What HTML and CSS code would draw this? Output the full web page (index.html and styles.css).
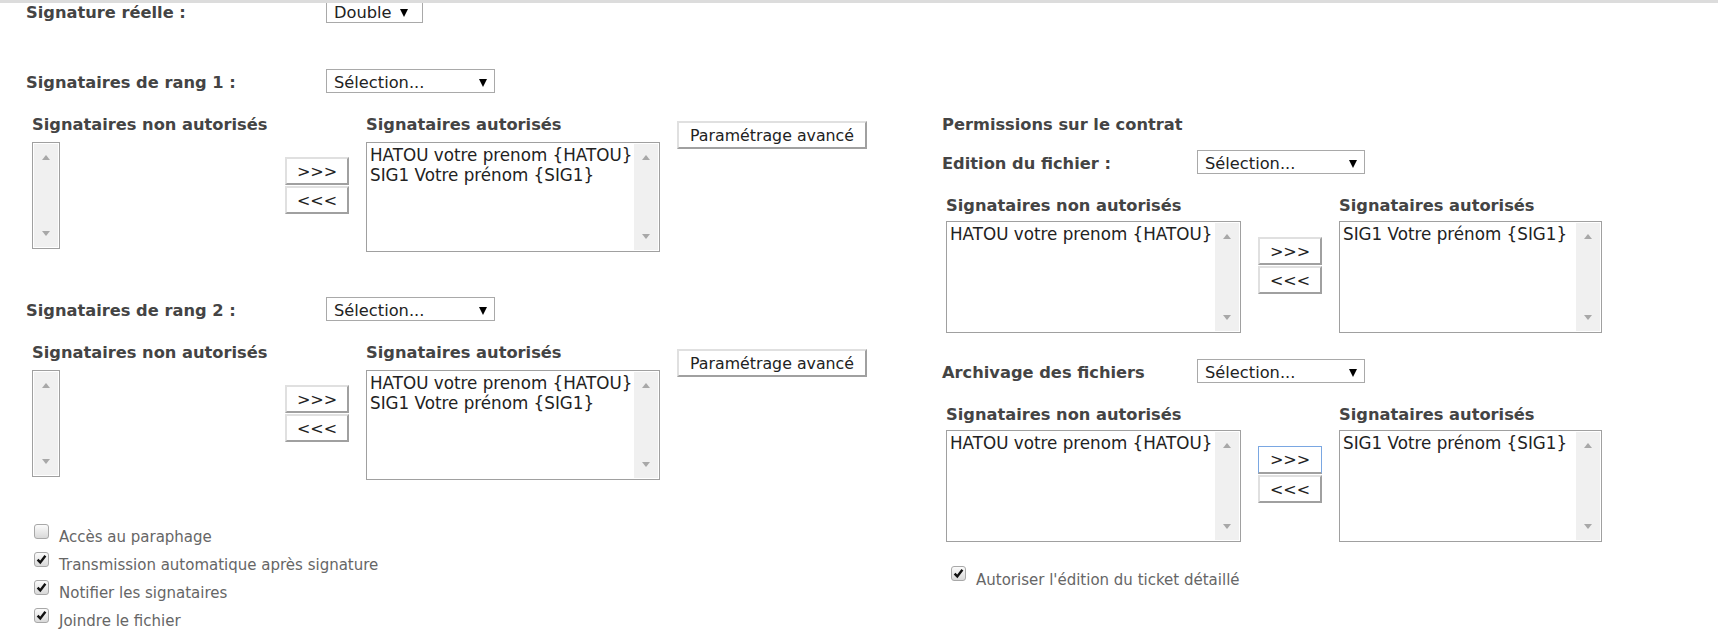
FILE: index.html
```html
<!DOCTYPE html>
<html lang="fr">
<head>
  <meta charset="UTF-8" />
  <meta name="viewport" content="width=device-width, initial-scale=1.0" />
  <title>Paramètres de signature</title>
  <link rel="stylesheet" href="styles.css">
</head>
<body>
  <div class="topbar"></div>
  <div class="page">
    <div class="col-left">
      <div class="field-row">
        <span class="field-label">Signature réelle :</span>
        <span class="select select-short">Double<i class="arrow"></i></span>
      </div>

      <div class="rank">
        <div class="field-row">
          <span class="field-label">Signataires de rang 1 :</span>
          <span class="select">Sélection...<i class="arrow"></i></span>
        </div>
        <div class="transfer">
          <div class="transfer-col from">
            <div class="transfer-title">Signataires non autorisés</div>
            <div class="listbox empty">
              <div class="scroll"><i class="up"></i><i class="down"></i></div>
            </div>
          </div>
          <div class="transfer-btns">
            <button type="button" class="btn">&gt;&gt;&gt;</button>
            <button type="button" class="btn">&lt;&lt;&lt;</button>
          </div>
          <div class="transfer-col to">
            <div class="transfer-title">Signataires autorisés</div>
            <div class="listbox">
              <ul class="items">
                <li>HATOU votre prenom {HATOU}</li>
                <li>SIG1 Votre prénom {SIG1}</li>
              </ul>
              <div class="scroll"><i class="up"></i><i class="down"></i></div>
            </div>
          </div>
          <button type="button" class="btn btn-advanced">Paramétrage avancé</button>
        </div>
      </div>

      <div class="rank">
        <div class="field-row">
          <span class="field-label">Signataires de rang 2 :</span>
          <span class="select">Sélection...<i class="arrow"></i></span>
        </div>
        <div class="transfer">
          <div class="transfer-col from">
            <div class="transfer-title">Signataires non autorisés</div>
            <div class="listbox empty">
              <div class="scroll"><i class="up"></i><i class="down"></i></div>
            </div>
          </div>
          <div class="transfer-btns">
            <button type="button" class="btn">&gt;&gt;&gt;</button>
            <button type="button" class="btn">&lt;&lt;&lt;</button>
          </div>
          <div class="transfer-col to">
            <div class="transfer-title">Signataires autorisés</div>
            <div class="listbox">
              <ul class="items">
                <li>HATOU votre prenom {HATOU}</li>
                <li>SIG1 Votre prénom {SIG1}</li>
              </ul>
              <div class="scroll"><i class="up"></i><i class="down"></i></div>
            </div>
          </div>
          <button type="button" class="btn btn-advanced">Paramétrage avancé</button>
        </div>
      </div>

      <div class="options">
        <label class="check-row">
          <span class="checkbox"></span>
          Accès au paraphage
        </label>
        <label class="check-row">
          <span class="checkbox"><svg viewBox="0 0 13 13"><path d="M2.6 6.6 5.3 9.4 10.4 2.8"/></svg></span>
          Transmission automatique après signature
        </label>
        <label class="check-row">
          <span class="checkbox"><svg viewBox="0 0 13 13"><path d="M2.6 6.6 5.3 9.4 10.4 2.8"/></svg></span>
          Notifier les signataires
        </label>
        <label class="check-row">
          <span class="checkbox"><svg viewBox="0 0 13 13"><path d="M2.6 6.6 5.3 9.4 10.4 2.8"/></svg></span>
          Joindre le fichier
        </label>
      </div>
    </div>

    <div class="col-right perm">
      <div class="perm-title">Permissions sur le contrat</div>

      <div class="perm-block">
        <div class="field-row">
          <span class="field-label">Edition du fichier :</span>
          <span class="select">Sélection...<i class="arrow"></i></span>
        </div>
        <div class="transfer">
          <div class="transfer-col from">
            <div class="transfer-title">Signataires non autorisés</div>
            <div class="listbox">
              <ul class="items"><li>HATOU votre prenom {HATOU}</li></ul>
              <div class="scroll"><i class="up"></i><i class="down"></i></div>
            </div>
          </div>
          <div class="transfer-btns">
            <button type="button" class="btn">&gt;&gt;&gt;</button>
            <button type="button" class="btn">&lt;&lt;&lt;</button>
          </div>
          <div class="transfer-col to">
            <div class="transfer-title">Signataires autorisés</div>
            <div class="listbox">
              <ul class="items"><li>SIG1 Votre prénom {SIG1}</li></ul>
              <div class="scroll"><i class="up"></i><i class="down"></i></div>
            </div>
          </div>
        </div>
      </div>

      <div class="perm-block">
        <div class="field-row">
          <span class="field-label">Archivage des fichiers</span>
          <span class="select">Sélection...<i class="arrow"></i></span>
        </div>
        <div class="transfer">
          <div class="transfer-col from">
            <div class="transfer-title">Signataires non autorisés</div>
            <div class="listbox">
              <ul class="items"><li>HATOU votre prenom {HATOU}</li></ul>
              <div class="scroll"><i class="up"></i><i class="down"></i></div>
            </div>
          </div>
          <div class="transfer-btns">
            <button type="button" class="btn focused">&gt;&gt;&gt;</button>
            <button type="button" class="btn">&lt;&lt;&lt;</button>
          </div>
          <div class="transfer-col to">
            <div class="transfer-title">Signataires autorisés</div>
            <div class="listbox">
              <ul class="items"><li>SIG1 Votre prénom {SIG1}</li></ul>
              <div class="scroll"><i class="up"></i><i class="down"></i></div>
            </div>
          </div>
        </div>
      </div>

      <div class="options">
        <label class="check-row">
          <span class="checkbox"><svg viewBox="0 0 13 13"><path d="M2.6 6.6 5.3 9.4 10.4 2.8"/></svg></span>
          Autoriser l'édition du ticket détaillé
        </label>
      </div>
    </div>
  </div>
</body>
</html>
```

FILE: styles.css
```css
* { box-sizing: border-box; }
body {
  margin: 0; font-family: "DejaVu Sans", Verdana, sans-serif;
  color: #444; background: #fff; overflow: hidden;
}
.topbar {
  position: fixed; top: 0; left: 0; right: 0; height: 3px;
  background: #dcdcdc; z-index: 2;
}
.page { display: flex; margin-top: -1px; }
.col-left { width: 942px; padding-left: 26px; }
.col-right { flex: 1; padding-top: 116px; }

/* label + liste deroulante */
.field-row { display: flex; align-items: baseline; }
.field-label {
  width: 300px; font-weight: bold; font-size: 16.25px; line-height: 20px;
}
.perm .field-label { width: 255px; }
.select {
  display: inline-flex; align-items: center; justify-content: space-between;
  width: 169px; height: 24px; padding: 4px 7px 0 7px;
  border: 1px solid #a9a9a9; background: #fff;
  color: #222; font-size: 16.25px; line-height: 18px;
}
.perm .select { width: 168px; }
.select-short { width: 97px; padding-right: 14px; }
.arrow {
  width: 0; height: 0; margin-top: -1px;
  border-left: 4.5px solid transparent; border-right: 4.5px solid transparent;
  border-top: 8px solid #000;
}

.rank { margin-top: 46px; }
.rank + .rank { margin-top: 45px; }
.perm-title { font-weight: bold; font-size: 16.25px; line-height: 20px; }
.perm-block { margin-top: 15px; }
.perm-block + .perm-block { margin-top: 26px; }

/* deux listes avec boutons de transfert */
.transfer { display: flex; align-items: flex-start; margin: 20px 0 0 6px; }
.perm .transfer { margin-left: 4px; }
.transfer-col.from { width: 253px; }
.perm .transfer-col.from { width: 312px; }
.transfer-col.to { margin-left: 17px; }
.transfer-title {
  padding-top: 2px; font-weight: bold; font-size: 16.25px; line-height: 20px;
  white-space: nowrap;
}
.listbox {
  display: flex; margin-top: 7px; width: 294px; height: 110px;
  border: 1px solid #a0a0a0; padding: 1px; background: #fff;
}
.listbox.empty { width: 28px; height: 107px; }
.perm .listbox { margin-top: 5px; width: 295px; height: 112px; }
.perm .to .listbox { width: 263px; }
.items {
  flex: 1; list-style: none; margin: 0; padding: 1px 0 0 2px;
  font-size: 16.75px; line-height: 20px; color: #222;
  white-space: nowrap; overflow: hidden;
}
.scroll {
  width: 24px; background: #f0f0f0;
  display: flex; flex-direction: column; justify-content: space-between;
  align-items: center; padding: 11px 0;
}
.scroll i {
  width: 0; height: 0;
  border-left: 4px solid transparent; border-right: 4px solid transparent;
}
.scroll .up { border-bottom: 5px solid #a8a8a8; }
.scroll .down { border-top: 5px solid #a8a8a8; }

.transfer-btns {
  display: flex; flex-direction: column; gap: 1px; width: 64px; margin-top: 44px;
}
.perm .transfer-btns { margin-top: 43px; }
.btn {
  height: 28px; padding: 0; background: #fff;
  border: 2px solid; border-color: #e0e0e0 #a0a0a0 #a0a0a0 #e0e0e0;
  font-family: inherit; font-size: 16px; color: #222; cursor: pointer;
}
.btn.focused { border: 1px solid #7aa7e2; border-bottom: 2px solid #a0a0a0; }
.btn-advanced { width: 190px; margin: 8px 0 0 17px; font-size: 15.8px; }

/* cases a cocher */
.options { margin: 43px 0 0 8px; }
.perm .options { margin: 24px 0 0 9px; }
.check-row {
  display: flex; align-items: flex-start; gap: 10px;
  font-size: 15px; line-height: 28px; color: #666;
}
.checkbox {
  width: 15px; height: 15px; margin-top: 1px;
  border: 1px solid #a8a8a8; border-radius: 3px;
  background: linear-gradient(#fbfbfb, #d9d9d9);
}
.perm .checkbox { margin-top: 0; }
.checkbox svg { display: block; width: 13px; height: 13px; }
.checkbox path { fill: none; stroke: #111; stroke-width: 2.4; }
```
